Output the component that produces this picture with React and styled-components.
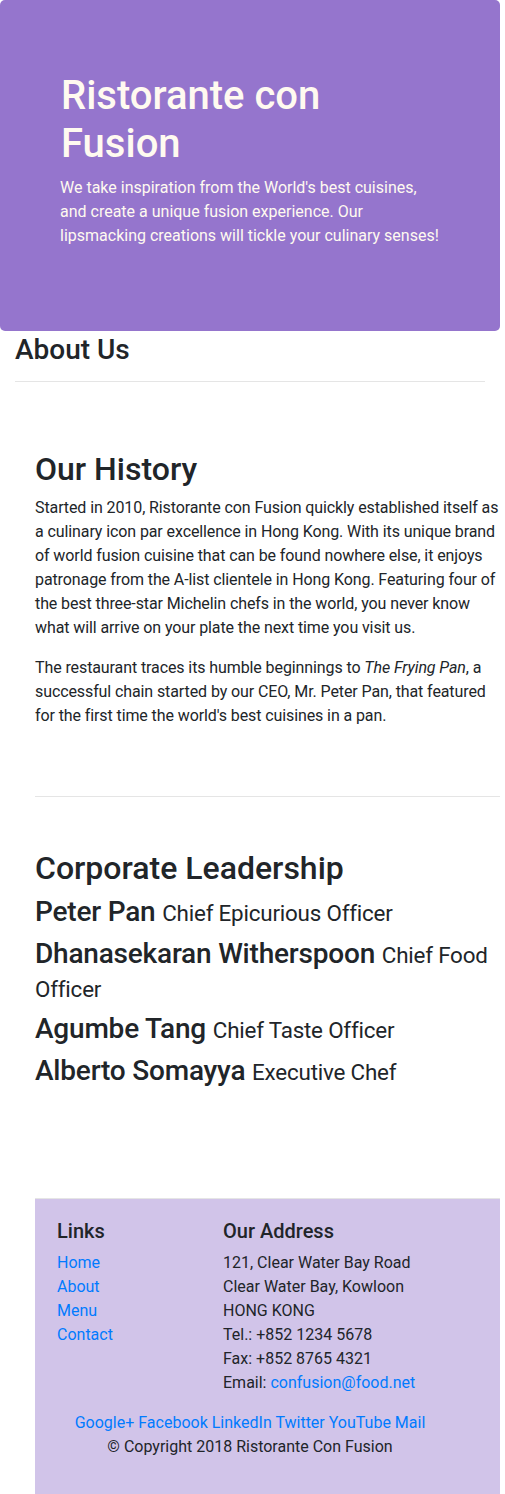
import React from 'react'
import styled, { createGlobalStyle } from 'styled-components'

const GlobalStyle = createGlobalStyle`
body {
  margin: 0;
  font-family: Roboto, "Liberation Sans", sans-serif;
  font-size: 16px;
  line-height: 1.5;
  color: #212529;
  background: #fff;
  overflow-x: hidden;
}
* { box-sizing: border-box; }
`

const Page = styled.div`
width: 500px;
`

const Jumbotron = styled.header`
background-color: #9575CD;
border-radius: 5px;
padding: 72px 40px 67px 61px;
color: floralwhite;
`
const Title = styled.h1`
font-size: 40px;
font-weight: 500;
line-height: 1.2;
margin: 0 0 8px;
max-width: 300px;
`
const Lead = styled.p`
margin: 0 0 16px -1px;
max-width: 380px;
`

const Container = styled.main`
padding: 2px 15px 0;
`
const PageTitle = styled.h3`
font-size: 28px;
font-weight: 500;
line-height: 1.2;
margin: 0;
`
const Rule = styled.hr`
border: 0;
border-top: 1px solid rgba(0, 0, 0, 0.1);
margin: ${p => p.$top || 14}px 0 0 ${p => p.$left || 0}px;
`

const Section = styled.section`
display: flow-root;
margin-left: 35px;
width: 470px;
padding-top: ${p => p.$top}px;
`
const SectionTitle = styled.h2`
font-size: 32px;
font-weight: 500;
line-height: 1.2;
margin: 0 0 8px;
`
const Para = styled.p`
margin: 0 0 16px;
letter-spacing: -0.1px;
`
const Leader = styled.h3`
font-size: 28px;
font-weight: 500;
line-height: 1.2;
margin: 0 0 8px;
letter-spacing: -0.2px;
`
const Role = styled.small`
font-size: 80%;
font-weight: 400;
`

const Footer = styled.footer`
margin-left: 35px;
background-color: #D1C4E9;
padding: 20px 0 40px;
min-height: 297px;
`
const FooterRow = styled.div`
display: grid;
grid-template-columns: 166px 1fr;
padding-left: 22px;
`
const FooterHeading = styled.h5`
font-size: 20px;
font-weight: 500;
line-height: 1.2;
margin: 0 0 8px;
`
const LinkList = styled.ul`
list-style: none;
margin: 0;
padding: 0;
`
const Link = styled.a`
color: #007bff;
text-decoration: none;
`
const Address = styled.address`
font-style: normal;
margin: 0 0 16px;
`
const FooterBottom = styled.div`
text-align: center;
margin-left: -35px;
width: 500px;
`

const leaders = [
  ['Peter Pan', 'Chief Epicurious Officer'],
  ['Dhanasekaran Witherspoon', 'Chief Food Officer'],
  ['Agumbe Tang', 'Chief Taste Officer'],
  ['Alberto Somayya', 'Executive Chef'],
]

export default function App() {
  return (
    <Page>
      <GlobalStyle />
      <Jumbotron>
        <Title>Ristorante con Fusion</Title>
        <Lead>
          We take inspiration from the World's best cuisines, and create a unique fusion
          experience. Our lipsmacking creations will tickle your culinary senses!
        </Lead>
      </Jumbotron>
      <Container>
        <PageTitle>About Us</PageTitle>
        <Rule />
      </Container>
      <Section $top={68}>
        <SectionTitle>Our History</SectionTitle>
        <Para>
          Started in 2010, Ristorante con Fusion quickly established itself as a culinary
          icon par excellence in Hong Kong. With its unique brand of world fusion cuisine
          that can be found nowhere else, it enjoys patronage from the A-list clientele in
          Hong Kong. Featuring four of the best three-star Michelin chefs in the world, you
          never know what will arrive on your plate the next time you visit us.
        </Para>
        <Para>
          The restaurant traces its humble beginnings to <em>The Frying Pan</em>, a
          successful chain started by our CEO, Mr. Peter Pan, that featured for the first
          time the world's best cuisines in a pan.
        </Para>
      </Section>
      <Rule $top={52} $left={35} />
      <Section $top={52}>
        <SectionTitle>Corporate Leadership</SectionTitle>
        {leaders.map(([name, role]) => (
          <Leader key={name}>
            {name} <Role>{role}</Role>
          </Leader>
        ))}
      </Section>
      <Rule $top={103} $left={35} />
      <Footer>
        <FooterRow>
          <div>
            <FooterHeading>Links</FooterHeading>
            <LinkList>
              <li><Link href="#">Home</Link></li>
              <li><Link href="#">About</Link></li>
              <li><Link href="#">Menu</Link></li>
              <li><Link href="#">Contact</Link></li>
            </LinkList>
          </div>
          <div>
            <FooterHeading>Our Address</FooterHeading>
            <Address>
              121, Clear Water Bay Road<br />
              Clear Water Bay, Kowloon<br />
              HONG KONG<br />
              Tel.: +852 1234 5678<br />
              Fax: +852 8765 4321<br />
              Email: <Link href="#">confusion@food.net</Link>
            </Address>
          </div>
        </FooterRow>
        <FooterBottom>
          <div>
            <Link href="#">Google+</Link> <Link href="#">Facebook</Link>{' '}
            <Link href="#">LinkedIn</Link> <Link href="#">Twitter</Link>{' '}
            <Link href="#">YouTube</Link> <Link href="#">Mail</Link>
          </div>
          <div>© Copyright 2018 Ristorante Con Fusion</div>
        </FooterBottom>
      </Footer>
    </Page>
  )
}
